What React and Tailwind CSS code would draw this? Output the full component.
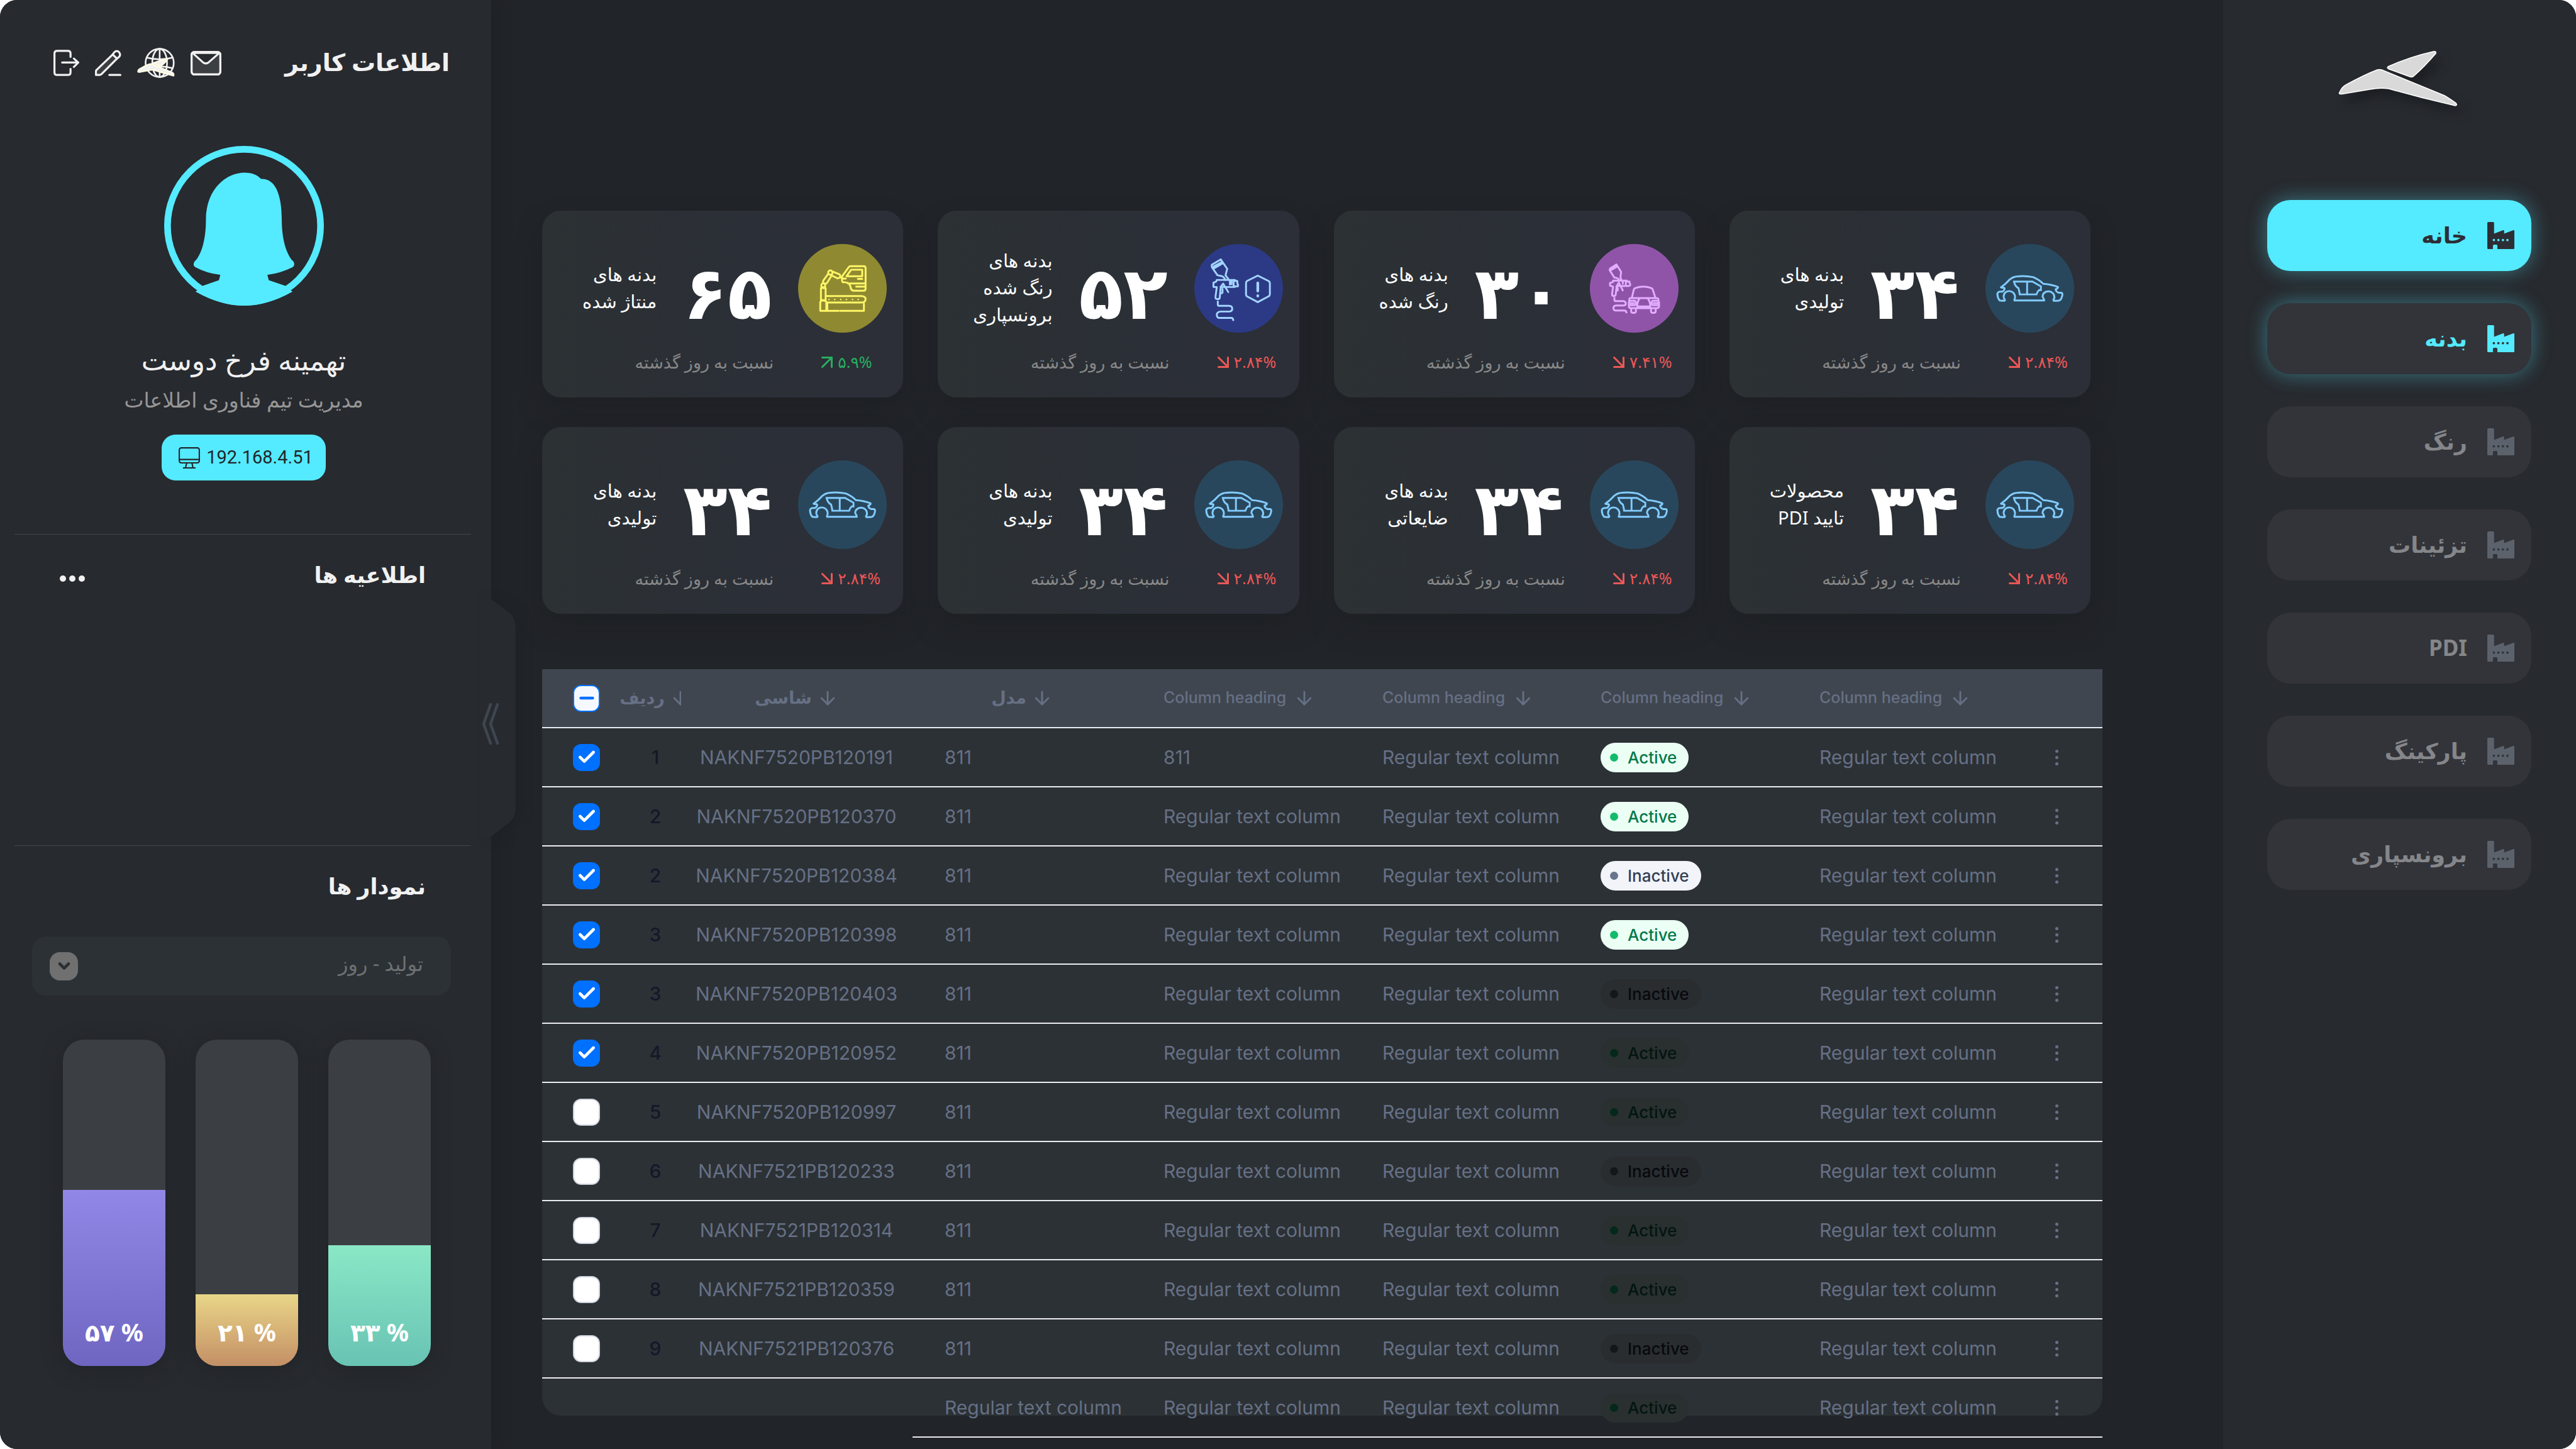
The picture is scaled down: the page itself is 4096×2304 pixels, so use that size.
import React from "react";
import { ArrowDown, ArrowDownRight, ArrowUpRight, Check, ChevronDown, Minus } from "lucide-react";

const menu = [
  { label: "خانه", state: "current" },
  { label: "بدنه", state: "hover" },
  { label: "رنگ" },
  { label: "تزئینات" },
  { label: "PDI" },
  { label: "پارکینگ" },
  { label: "برونسپاری" },
];

const cards = [
  { value: "۶۵", label: ["بدنه های", "منتاژ شده"], change: "۵.۹%", up: true, icon: "robot" },
  { value: "۵۲", label: ["بدنه های", "رنگ شده", "برونسپاری"], change: "۲.۸۴%", icon: "sprayAlert" },
  { value: "۳۰", label: ["بدنه های", "رنگ شده"], change: "۷.۴۱%", icon: "sprayCar" },
  { value: "۳۴", label: ["بدنه های", "تولیدی"], change: "۲.۸۴%", icon: "car" },
  { value: "۳۴", label: ["بدنه های", "تولیدی"], change: "۲.۸۴%", icon: "car" },
  { value: "۳۴", label: ["بدنه های", "تولیدی"], change: "۲.۸۴%", icon: "car" },
  { value: "۳۴", label: ["بدنه های", "ضایعاتی"], change: "۲.۸۴%", icon: "car" },
  { value: "۳۴", label: ["محصولات", "تایید PDI"], change: "۲.۸۴%", icon: "car" },
];

const R = "Regular text column";
const rows = [
  { n: "1", vin: "NAKNF7520PB120191", model: "811", d: "811", status: "Active", lit: true, checked: true },
  { n: "2", vin: "NAKNF7520PB120370", model: "811", d: R, status: "Active", lit: true, checked: true },
  { n: "2", vin: "NAKNF7520PB120384", model: "811", d: R, status: "Inactive", lit: true, checked: true },
  { n: "3", vin: "NAKNF7520PB120398", model: "811", d: R, status: "Active", lit: true, checked: true },
  { n: "3", vin: "NAKNF7520PB120403", model: "811", d: R, status: "Inactive", checked: true },
  { n: "4", vin: "NAKNF7520PB120952", model: "811", d: R, status: "Active", checked: true },
  { n: "5", vin: "NAKNF7520PB120997", model: "811", d: R, status: "Active" },
  { n: "6", vin: "NAKNF7521PB120233", model: "811", d: R, status: "Inactive" },
  { n: "7", vin: "NAKNF7521PB120314", model: "811", d: R, status: "Active" },
  { n: "8", vin: "NAKNF7521PB120359", model: "811", d: R, status: "Active" },
  { n: "9", vin: "NAKNF7521PB120376", model: "811", d: R, status: "Inactive" },
  { model: R, d: R, status: "Active", partial: true },
];

const bars = [
  { label: "۵۷ %", height: 54, fill: "bg-linear-to-b from-[#9187e6] to-[#6f66c2]" },
  { label: "۲۱ %", height: 22, fill: "bg-linear-to-b from-[#e8d688] to-[#c48f66]" },
  { label: "۳۳ %", height: 37, fill: "bg-linear-to-b from-[#8ae8c6] to-[#68c3b3]" },
];

function FactoryIcon({ className }) {
  return (
    <svg viewBox="0 0 43 43" className={className} fill="currentColor" aria-hidden="true">
      <path
        fillRule="evenodd"
        d="M1.5 0H9.2Q10.7 0 10.7 1.5V18.6L25.2 13.1Q26.7 12.7 26.7 14.3V18.6L41.5 13.1Q43 12.7 43 14.3V41.5Q43 43 41.5 43H16V38Q16 36 14.4 36H10.5Q8.9 36 8.9 38V43H1.5Q0 43 0 41.5V1.5Q0 0 1.5 0ZM8.5 28.7a1.9 1.9 0 1 0 3.8 0a1.9 1.9 0 1 0-3.8 0ZM15.7 28.7a1.9 1.9 0 1 0 3.8 0a1.9 1.9 0 1 0-3.8 0ZM22.9 28.7a1.9 1.9 0 1 0 3.8 0a1.9 1.9 0 1 0-3.8 0ZM30.1 28.7a1.9 1.9 0 1 0 3.8 0a1.9 1.9 0 1 0-3.8 0Z"
      />
    </svg>
  );
}

function BirdLogo() {
  return (
    <svg viewBox="-1 -1 190 90" className="h-[90px] w-[190px] overflow-visible drop-shadow-[10px_12px_8px_rgba(20,24,26,0.6)]" fill="#d9d9d9" stroke="#ffffff" strokeWidth="1.6" strokeLinejoin="round" role="img" aria-label="Logo">
      <path d="M1 66Q5 57 11 54Q40 38 61 30Q64 29 68 30L168 71Q178 77 186 83Q189 86 185 87Q132 75 79 60Q65 58 50 61L5 68.5Q-1 69 1 66Z" />
      <path d="M79 24.500Q114 9 150 1Q155 0 154 4Q137 24 119 40Q117 42 113 41L80 29Q75 27 79 24.500Z" />
    </svg>
  );
}

function Avatar() {
  return (
    <svg viewBox="0 0 478 478" className="size-[254px]" fill="none" role="img" aria-label="تصویر کاربر">
      <circle cx="239" cy="239" r="229" stroke="#54eaff" strokeWidth="20" />
      <path
        fill="#54eaff"
        d="M125 222C125 125 190 80 240 80C265 80 278 87 290 99C335 97 352 150 352 222C352 290 371 332 387 346Q393 358 384 363Q350 380 309 386L313 402L364 419L384 436Q310 478 239 478Q168 478 94 436L114 419L164 402L168 386Q125 380 94 363Q84 358 91 346C107 332 125 290 125 222Z"
      />
    </svg>
  );
}

function LogoutIcon() {
  return (
    <svg viewBox="0 0 77 78" className="h-[42px] w-[41px]" fill="none" stroke="#f1f1f1" strokeWidth="6" strokeLinecap="round" strokeLinejoin="round" aria-hidden="true">
      <path d="M51 21V11Q51 3 43 3H11Q3 3 3 11V67Q3 75 11 75H43Q51 75 51 67V57M26 38H73M61 26L74 38L61 51" />
    </svg>
  );
}

function PencilIcon() {
  return (
    <svg viewBox="0 0 79 78" className="h-[42px] w-[42px]" fill="none" stroke="#f1f1f1" strokeWidth="6" strokeLinecap="round" strokeLinejoin="round" aria-hidden="true">
      <path d="M53 14L66 26L20 72Q17 75 13 75H3V65Q3 60 7 58Z" fill="#3c3f42" />
      <path d="M53 14L57 8Q65 0 72 7Q79 15 71 22L66 26M43 75H76" />
    </svg>
  );
}

function GlobeIcon() {
  return (
    <svg viewBox="0 0 112 90" className="h-[48px] w-[60px]" fill="none" stroke="#f1f1f1" strokeWidth="5" aria-hidden="true">
      <circle cx="67" cy="45" r="42" />
      <ellipse cx="67" cy="45" rx="22" ry="42" />
      <path d="M67 3V87M28 29Q67 40 106 29M28 61Q67 50 106 61" />
      <path d="M3 69Q4 65 10 62Q30 51 38 49Q42 48 46 50L106 75Q110 78 108 83Q74 74 50 66Q42 65 34 67L7 72Q2 73 3 69Z" fill="#f1f1f1" stroke="#fffbe6" />
      <path d="M47 46Q70 37 90 34Q80 48 69 54Z" fill="#f1f1f1" stroke="#fffbe6" strokeLinejoin="round" />
    </svg>
  );
}

function MailIcon() {
  return (
    <svg viewBox="0 0 93 74" className="h-[39px] w-[49px]" fill="none" stroke="#f1f1f1" strokeWidth="6" strokeLinejoin="round" aria-hidden="true">
      <rect x="3" y="3" width="87" height="68" rx="9" fill="#3c3f42" />
      <path d="M6 6L37 34Q46 41 55 34L87 6Z" fill="#272a2f" />
      <rect x="3" y="3" width="87" height="68" rx="9" />
    </svg>
  );
}

function MonitorIcon() {
  return (
    <svg viewBox="0 0 64 64" className="size-[34px]" fill="none" stroke="#22262b" strokeWidth="4" aria-hidden="true">
      <rect x="2" y="2" width="60" height="45" rx="6" />
      <path d="M2 37H62M24 48L21 61M40 48L43 61M13 62H51" />
    </svg>
  );
}

const glyph = {
  fill: "none",
  strokeWidth: 5.5,
  strokeLinejoin: "round",
  strokeLinecap: "round",
  viewBox: "0 0 264 264",
  className: "size-[141px]",
  "aria-hidden": true,
};

function CarIcon() {
  return (
    <svg {...glyph} stroke="#82ccff">
      <circle cx="132" cy="132" r="132" fill="#29475c" stroke="none" />
      <path d="M46 129Q60 120 73 105Q84 97 95 96.500Q118 94 142 98.500Q160 106 172 118.500Q196 120 216 128Q217 131 209 135Q210 143 219 145H226Q231 147 228 156Q225 169 215 169H203Q201 166 205 161C208 135 170 135 170 157Q174 162 175 168H86Q85 166 88 161C90 134 54 134 54 157Q55 164 58 166Q58 170 52 169L42 168Q36 160 35.500 149Q36 143 42 142H50Q57 138 57 132L55 130Q48 131 46 129Z" />
      <path strokeLinejoin="miter" d="M85 112H140L165 126V137H160Q154 142 152 150H102Q101 140 98 131Q88 126 85 112ZM124 112V150" />
    </svg>
  );
}

function SprayAlertIcon() {
  return (
    <svg {...glyph} stroke="#a3d4ff">
      <circle cx="132" cy="132" r="132" fill="#2c3a85" stroke="none" />
      <path d="M79 46L52 62Q51 66 53 70L69 93L83 96Q89 98 92 107M79 46L98 74L93 93L103 107M54 69L82 54M58 73L85 57" />
      <path d="M67 107H121V110H128V117L130 120V126H121V128H84Q78 128 78 134L76 158Q76 164 69 164Q62 164 63 158L67 128H57V115L65 112ZM117 108V127M106 108V121M111 108V120" />
      <path d="M86 118L78 128M86 118L93 130L97 136L101 143M84 134V145L78 148" />
      <path strokeLinecap="butt" d="M70 169V180Q70 184 75 184H103Q113 184 113 193Q113 201 103 201H80Q67 201 67 211Q67 220 76 220H110Q116 220 116 229" />
      <path d="M189 94L221 110Q225 112 225 117V150Q225 154 221 156L189 173L157 156Q154 154 154 150V117Q154 112 157 110Z" />
      <path strokeWidth="8" d="M189 116L189 140M189 154V155" />
    </svg>
  );
}

function SprayCarIcon() {
  return (
    <svg {...glyph} stroke="#e3adff">
      <circle cx="132" cy="132" r="132" fill="#8f54a8" stroke="none" />
      <path d="M79 61L60 73Q58 76 60 80L73 100Q86 101 88 109M79 61L93 83L91 100L95 109" />
      <path strokeWidth="9" d="M62 76L80 66" />
      <path d="M69 109H110V112H118V116L120 119V123L116 125H84Q80 126 79 132L77 149Q77 155 71 155Q66 155 66 149L69 127L60 124V116L69 113ZM107 110V125M98 110V118M86 115L79 127M86 115L98 138M83 132V138L79 140" />
      <path strokeLinecap="butt" d="M73 158V166Q73 170 78 170H99Q107 171 107 177Q107 183 99 183H78Q70 184 70 191Q70 198 79 198H103Q109 198 109 206" />
      <path d="M125 160L131 135Q132 132 136 131Q159 123 182 131Q186 132 187 135L195 160" />
      <path d="M121 161H199Q205 161 204 168L206 175V185Q206 191 199 191H122Q116 191 116 185V175L117 168Q117 161 121 161ZM118 169H132Q137 169 137 175Q137 182 132 182H118M118 176H131M204 169H189Q184 169 184 175Q184 182 189 182H204M190 176H204M148 162Q140 172 141 190M172 162Q181 172 180 190M141 186H180" />
      <path d="M123 192V201Q123 205 130 205Q137 205 137 201V192M182 192V201Q182 205 189 205Q196 205 196 201V192" />
    </svg>
  );
}

function RobotIcon() {
  return (
    <svg {...glyph} stroke="#fff766">
      <circle cx="132" cy="132" r="132" fill="#8f8a32" stroke="none" />
      <path d="M156 66H196Q201 66 201 72V133Q201 139 195 139H166Q159 139 157 132Q155 115 141 114H136Q131 114 131 109V99Q131 95 134 92L150 70Q152 66 156 66ZM158 76.500H191V96H144ZM148 117.500H200M178 104H191M173 127H200" />
      <circle cx="96" cy="85" r="6.500" />
      <circle cx="75" cy="123" r="6" />
      <path d="M103 82L123 90Q127 93 125 98Q122 103 117 102L101 94M127 99L131 103H142M88 91L75 109Q73 114 77 117Q81 120 86 116L99 95" />
      <path d="M68 131H82V167H68ZM66 199V174Q66 168 75 168Q84 168 84 174V199ZM86 155H107M111 155H189Q201 156 201 164Q201 174 189 174H86M87 176V199H121M126 199H196V176" />
      <path strokeWidth="4.500" d="M92 165h.1M109 165h.1M127 165h.1M144 165h.1M162 165h.1M179 165h.1" />
    </svg>
  );
}

const icons = { car: CarIcon, sprayAlert: SprayAlertIcon, sprayCar: SprayCarIcon, robot: RobotIcon };

function StatCard({ card }) {
  const Icon = icons[card.icon];
  const Arrow = card.up ? ArrowUpRight : ArrowDownRight;
  return (
    <article className="rounded-[30px] bg-linear-to-r from-[#2c3134] via-[#2b2f36] to-[#2c2f38] pt-[53px] pb-8 shadow-[0_22px_36px_rgba(28,32,34,0.7)]">
      <div className="flex h-[141px] items-center gap-9 pr-[26px]">
        <p dir="rtl" className="flex-1 pb-1 text-start text-[29px] leading-[43px] text-white">
          {card.label.map((line) => (
            <span key={line} className="block whitespace-nowrap">{line}</span>
          ))}
        </p>
        <p className="flex w-[153px] justify-center pt-2 text-[116px] leading-[141px] font-bold text-white">{card.value}</p>
        <Icon />
      </div>
      <div className="mt-[23px] flex h-12 items-center justify-end gap-[76px]">
        <p dir="rtl" className="text-[27px] whitespace-nowrap text-[#888888]">نسبت به روز گذشته</p>
        <p className={card.up ? "flex w-[130px] items-center gap-2 text-[25px] text-[#27ae60]" : "flex w-[130px] items-center gap-2 text-[25px] text-[#eb5757]"}>
          <Arrow size={18} viewBox="6 6 12 12" strokeWidth={2} className="shrink-0" aria-hidden="true" />
          <span dir="ltr">{card.change}</span>
        </p>
      </div>
    </article>
  );
}

function TickBox({ label, checked, mixed }) {
  const tone = mixed
    ? "border-[#0070ff] bg-[#f5f9ff]"
    : checked
      ? "border-[#0070ff] bg-[#0070ff]"
      : "border-[#cfd4e0] bg-white";
  return (
    <label className="grid size-[43px] place-items-center">
      <input type="checkbox" aria-label={label} defaultChecked={checked} className={`col-start-1 row-start-1 size-[43px] appearance-none rounded-[13px] border-2 ${tone}`} />
      {mixed && <Minus size={32} strokeWidth={3.5} className="pointer-events-none col-start-1 row-start-1 text-[#0070ff]" />}
      {checked && !mixed && <Check size={32} strokeWidth={3.5} className="pointer-events-none col-start-1 row-start-1 text-white" />}
    </label>
  );
}

function StatusBadge({ status, lit }) {
  const on = status === "Active";
  let pill = on ? "bg-[#29302f] text-[#03150f]" : "bg-[#292d30] text-[#08090d]";
  let dot = on ? "bg-[#04281a]" : "bg-[#14171a]";
  if (lit) {
    pill = on ? "bg-[#ebfff4] text-[#04784a]" : "bg-[#f2f4fa] text-[#344054]";
    dot = on ? "bg-[#14ba6c]" : "bg-[#69758c]";
  }
  return (
    <span className={`inline-flex h-[47px] items-center gap-[15px] rounded-full pr-[19px] pl-[15px] align-middle text-[26px] font-medium ${pill}`}>
      <span className={`size-[13px] rounded-full ${dot}`} />
      {status}
    </span>
  );
}

function Heading({ children, persian, clipped }) {
  return (
    <span className={persian ? "flex items-center justify-center gap-2" : "flex items-center gap-3 pl-[51px]"}>
      <span className={persian ? "font-['DejaVu_Sans',sans-serif] text-[27px] font-bold whitespace-nowrap" : "text-[25px] font-medium whitespace-nowrap"}>{children}</span>
      <span className={clipped ? "w-[18px] shrink-0 overflow-hidden" : "shrink-0"}>
        <ArrowDown size={34} strokeWidth={2} aria-hidden="true" />
      </span>
    </span>
  );
}

function DataTable() {
  return (
    <table className="w-full table-fixed border-separate border-spacing-0 text-left font-['Inter',sans-serif] text-[30px] text-[#667085]">
      <colgroup>
        <col className="w-[140px]" />
        <col className="w-[80px]" />
        <col className="w-[369px]" />
        <col className="w-[348px]" />
        <col className="w-[348px]" />
        <col className="w-[347px]" />
        <col className="w-[348px]" />
        <col className="w-[347px]" />
        <col className="w-[154px]" />
      </colgroup>
      <thead>
        <tr className="h-[94px] bg-[#40464f] *:border-b-2 *:border-[#e9ebf2] *:p-0">
          <th scope="col"><div className="pl-[49px]"><TickBox label="Select all rows" mixed /></div></th>
          <th scope="col"><div className="-ml-4"><Heading persian clipped>ردیف</Heading></div></th>
          <th scope="col"><Heading persian>شاسی</Heading></th>
          <th scope="col"><Heading persian>مدل</Heading></th>
          <th scope="col"><Heading>Column heading</Heading></th>
          <th scope="col"><Heading>Column heading</Heading></th>
          <th scope="col"><Heading>Column heading</Heading></th>
          <th scope="col"><Heading>Column heading</Heading></th>
          <th scope="col" aria-label="Actions" />
        </tr>
      </thead>
      <tbody>
        {rows.map((row, i) => {
          const line = "border-b-2 border-[#ebecef]";
          const lead = row.partial ? "" : line;
          return (
            <tr key={i} className="h-[94px] *:p-0">
              <td className={lead}>{!row.partial && <div className="pl-[49px]"><TickBox label={`Select row ${row.n}`} checked={row.checked} /></div>}</td>
              <td className={`${lead} text-center font-medium text-[#131829]`}>{row.n}</td>
              <td className={`${lead} text-center`}>{row.vin}</td>
              <td className={line}><span className="pl-[51px]">{row.model}</span></td>
              <td className={line}><span className="pl-[51px]">{row.d}</span></td>
              <td className={line}><span className="pl-[51px]">{R}</span></td>
              <td className={line}><div className="flex pl-[51px]"><StatusBadge status={row.status} lit={row.lit} /></div></td>
              <td className={line}><span className="pl-[51px]">{R}</span></td>
              <td className={line}>
                <button type="button" aria-label="Row menu" className="ml-[65px] flex h-10 w-8 flex-col items-center justify-center gap-[5px]">
                  <span className="size-[5px] rounded-full bg-[#667085]" />
                  <span className="size-[5px] rounded-full bg-[#667085]" />
                  <span className="size-[5px] rounded-full bg-[#667085]" />
                </button>
              </td>
            </tr>
          );
        })}
      </tbody>
    </table>
  );
}

function UserPanel() {
  return (
    <aside className="relative z-10 w-[781px] shrink-0 bg-[#272a2f] shadow-[11px_0_20px_rgba(28,32,34,0.35)]">
      <header className="mt-[72px] flex h-14 items-center justify-between pr-[66px] pl-[85px]">
        <div className="flex items-center gap-[25px]">
          <button type="button" aria-label="خروج"><LogoutIcon /></button>
          <button type="button" aria-label="ویرایش"><PencilIcon /></button>
          <button type="button" aria-label="وب سایت"><GlobeIcon /></button>
          <button type="button" aria-label="پیام ها"><MailIcon /></button>
        </div>
        <h1 dir="rtl" className="pb-1 text-[38px] leading-[52px] font-bold whitespace-nowrap text-[#f1f1f1]">اطلاعات کاربر</h1>
      </header>

      <section className="mt-[104px] flex flex-col items-center pr-[6px]">
        <Avatar />
        <h2 dir="rtl" className="mt-14 text-[44px] leading-[60px] whitespace-nowrap text-[#f1f1f1]">تهمینه فرخ دوست</h2>
        <p dir="rtl" className="mt-3 text-[33px] leading-[44px] whitespace-nowrap text-[#969696]">مدیریت تیم فناوری اطلاعات</p>
        <p className="mt-[33px] flex h-[73px] items-center gap-[10px] rounded-[22px] bg-[#54eaff] pr-5 pl-[27px] font-['Roboto',sans-serif] text-[29px] text-[#22262b]">
          <MonitorIcon />
          192.168.4.51
        </p>
      </section>

      <section className="mt-[85px] mr-8 ml-[23px] h-[495px] border-t border-[#42474c] pt-[34px]">
        <div className="flex h-[60px] items-center justify-between pr-[72px] pl-[72px]">
          <button type="button" aria-label="بیشتر" className="flex gap-[5px] pt-3">
            <span className="size-[10px] rounded-full bg-[#f1f1f1]" />
            <span className="size-[10px] rounded-full bg-[#f1f1f1]" />
            <span className="size-[10px] rounded-full bg-[#f1f1f1]" />
          </button>
          <h2 dir="rtl" className="text-[35px] font-bold whitespace-nowrap text-[#f1f1f1]">اطلاعیه ها</h2>
        </div>
      </section>

      <section className="mr-8 ml-[23px] border-t border-[#42474c] pt-[34px]">
        <h2 dir="rtl" className="pr-[72px] text-[35px] leading-[60px] font-bold whitespace-nowrap text-[#f1f1f1]">نمودار ها</h2>
        <div className="mt-[50px] mr-8 ml-7 grid items-center">
          <select dir="rtl" aria-label="نمودار" className="col-start-1 row-start-1 h-[94px] w-full appearance-none rounded-[22px] bg-[#2c3135] pr-11 pb-2 pl-24 text-[32px] text-[#6d7072]">
            <option>تولید - روز</option>
          </select>
          <span className="pointer-events-none col-start-1 row-start-1 ml-7 grid size-[45px] place-items-center rounded-[16px] bg-[#707070]">
            <ChevronDown size={28} strokeWidth={4} className="text-[#2c3135]" aria-hidden="true" />
          </span>
        </div>
        <div className="mt-[70px] mr-16 ml-[77px] grid h-[519px] grid-cols-3 gap-12">
          {bars.map((bar) => (
            <div key={bar.label} className="flex flex-col justify-end overflow-hidden rounded-[34px] bg-[#3b3e42] shadow-[0_6px_30px_rgba(28,32,34,0.6)]">
              <div className={`flex items-end justify-center pb-8 ${bar.fill}`} style={{ height: `${bar.height}%` }}>
                <span dir="ltr" className="text-[39px] leading-[44px] font-bold whitespace-nowrap text-white">{bar.label}</span>
              </div>
            </div>
          ))}
        </div>
      </section>

      <button type="button" aria-label="بستن پنل" className="absolute top-[952px] -right-10">
        <svg viewBox="0 0 54 380" className="h-[380px] w-[54px] drop-shadow-[10px_2px_8px_rgba(28,32,34,0.5)]" fill="none" aria-hidden="true">
          <path d="M0 0H13L43 22Q53 31 53 48V331Q53 347 43 356L13 379H0Z" fill="#272a2f" />
          <path d="M13 168L2 199L13 230M24 168L13 199L24 230" stroke="#3e464f" strokeWidth="4.500" strokeLinecap="round" strokeLinejoin="round" />
        </svg>
      </button>
    </aside>
  );
}

function MenuPanel() {
  const tones = {
    current: "bg-[#54eaff] text-[#2d2e35] shadow-[0_0_32px_rgba(84,234,255,0.4)]",
    hover: "bg-[#323439] text-[#54eaff] shadow-[0_0_32px_rgba(84,234,255,0.4)]",
    idle: "bg-[#323439] text-[#85868a]",
  };
  return (
    <aside className="w-[561px] shrink-0 bg-[#272a2f]">
      <div className="mt-20 ml-[183px]"><BirdLogo /></div>
      <nav className="mt-[148px] flex flex-col gap-[51px] pr-[71px] pl-[70px]">
        {menu.map((item) => {
          const state = item.state || "idle";
          return (
            <a key={item.label} href="#" dir="rtl" aria-current={state === "current" ? "page" : undefined} className={`flex h-[113px] items-center gap-8 rounded-[37px] pr-[27px] text-[35px] font-bold ${tones[state]}`}>
              <FactoryIcon className={state === "idle" ? "size-[43px] shrink-0 text-[#5c626b]" : "size-[43px] shrink-0"} />
              <span>{item.label}</span>
            </a>
          );
        })}
      </nav>
    </aside>
  );
}

export default function App() {
  return (
    <div className="bg-white">
      <div className="flex h-screen min-h-[2304px] overflow-hidden rounded-[27px] bg-[#212429] font-['Noto_Sans','DejaVu_Sans',sans-serif]">
        <UserPanel />
        <main className="min-w-0 flex-1 pt-[335px] pr-48 pl-[81px]">
          <section className="grid grid-cols-4 gap-x-[55px] gap-y-[47px] pr-[19px]">
            {cards.map((card, i) => (
              <StatCard key={i} card={card} />
            ))}
          </section>
          <section className="mt-[88px] h-[1187px] rounded-b-[30px] bg-[#2c3135]">
            <DataTable />
          </section>
        </main>
        <MenuPanel />
      </div>
    </div>
  );
}
